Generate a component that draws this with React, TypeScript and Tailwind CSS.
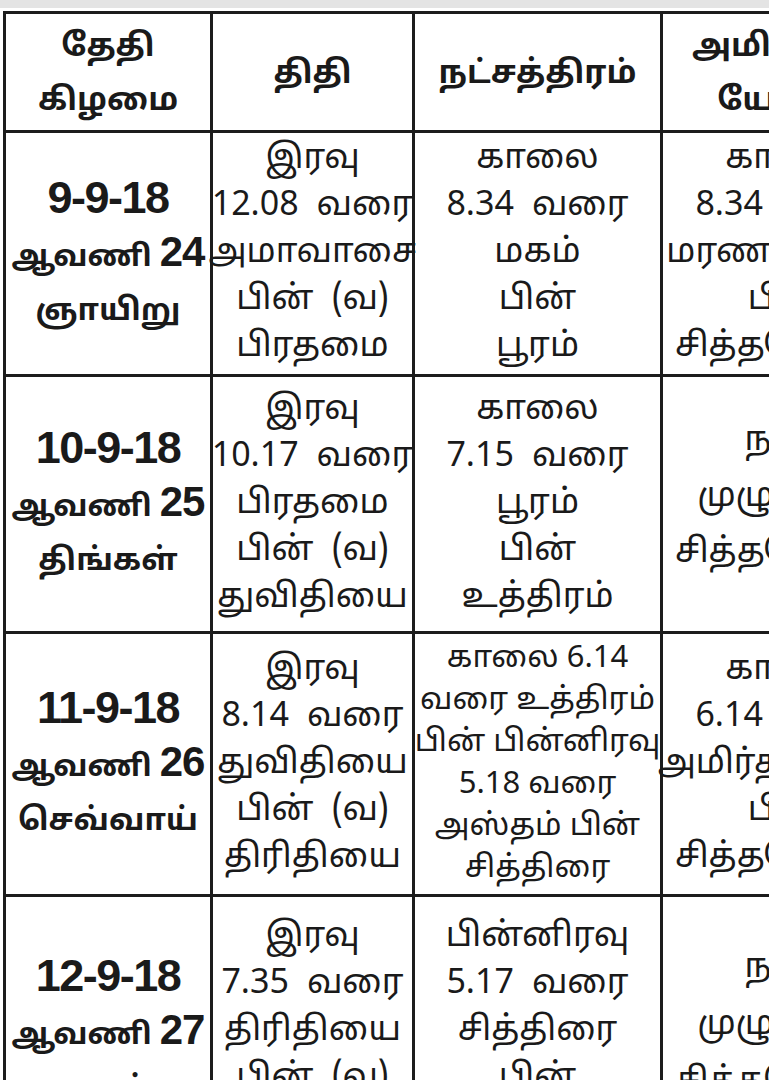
import React from "react";

type Cell = { lines: string[]; lh?: number; size?: number; gap?: number; pb?: number };

const TA = "font-['Liberation_Sans_Narrow','Noto_Sans_Tamil','Lohit_Tamil','Noto_Sans',sans-serif]";
const TA_BOLD = "font-['Liberation_Sans','Noto_Sans_Tamil','Lohit_Tamil','Noto_Sans',sans-serif]";

const rows: { h: number; date: [string, string, string]; cols: Cell[] }[] = [
  {
    h: 244,
    date: ["9-9-18", "24", "ஞாயிறு"],
    cols: [
      { lines: ["இரவு", "12.08 வரை", "அமாவாசை", "பின் (வ)", "பிரதமை"] },
      { lines: ["காலை", "8.34 வரை", "மகம்", "பின்", "பூரம்"] },
      { lines: ["காலை", "8.34 வரை", "மரணயோகம்", "பின்", "சித்தயோகம்"] },
    ],
  },
  {
    h: 257,
    date: ["10-9-18", "25", "திங்கள்"],
    cols: [
      { lines: ["இரவு", "10.17 வரை", "பிரதமை", "பின் (வ)", "துவிதியை"] },
      { lines: ["காலை", "7.15 வரை", "பூரம்", "பின்", "உத்திரம்"] },
      { lines: ["நாள்", "முழுவதும்", "சித்தயோகம்"], lh: 56, pb: 12 },
    ],
  },
  {
    h: 263,
    date: ["11-9-18", "26", "செவ்வாய்"],
    cols: [
      { lines: ["இரவு", "8.14 வரை", "துவிதியை", "பின் (வ)", "திரிதியை"] },
      {
        lines: ["காலை 6.14", "வரை உத்திரம்", "பின் பின்னிரவு", "5.18 வரை", "அஸ்தம் பின்", "சித்திரை"],
        lh: 42,
        size: 31,
        gap: 8,
      },
      { lines: ["காலை", "6.14 வரை", "அமிர்தயோகம்", "பின்", "சித்தயோகம்"] },
    ],
  },
  {
    h: 272,
    date: ["12-9-18", "27", "புதன்"],
    cols: [
      { lines: ["இரவு", "7.35 வரை", "திரிதியை", "பின் (வ)", "சதுர்த்தி"] },
      { lines: ["பின்னிரவு", "5.17 வரை", "சித்திரை", "பின்", "சுவாதி"] },
      { lines: ["நாள்", "முழுவதும்", "சித்தயோகம்"], lh: 57, pb: 12 },
    ],
  },
];

function Line({ text, gap }: { text: string; gap: number }) {
  const words = text.split(" ");
  return (
    <div className="flex justify-center whitespace-nowrap" style={{ columnGap: gap }}>
      {words.map((w, i) => (
        <span key={i}>{w}</span>
      ))}
    </div>
  );
}

const cellBorder = "border-r-[3px] border-b-[3px] border-[#1c1c1c]";

export default function App() {
  return (
    <div className="w-[769px] h-[1080px] overflow-hidden bg-white text-[#1a1a1a]">
      <div className="h-[8px] bg-[#e4e4e4]" />
      <div className="pt-[3px] pl-[3px]">
        <div className="grid grid-cols-[207px_202px_248px_250px] w-[907px] border-t-[3px] border-l-[3px] border-[#1c1c1c]">
          {/* header */}
          <div className={`h-[119px] ${cellBorder} flex flex-col items-center justify-center font-bold text-[32px] leading-[54px] ${TA_BOLD}`}>
            <span>தேதி</span>
            <span>கிழமை</span>
          </div>
          <div className={`h-[119px] ${cellBorder} flex items-center justify-center font-bold text-[32px] ${TA_BOLD}`}>
            திதி
          </div>
          <div className={`h-[119px] ${cellBorder} flex items-center justify-center font-bold text-[32px] ${TA_BOLD}`}>
            நட்சத்திரம்
          </div>
          <div className={`h-[119px] ${cellBorder} flex flex-col items-center justify-center font-bold text-[32px] leading-[54px] ${TA_BOLD}`}>
            <span className="whitespace-nowrap">அமிர்தாதி</span>
            <span className="whitespace-nowrap">யோகம்</span>
          </div>

          {rows.map((r, ri) => (
            <React.Fragment key={ri}>
              <div
                className={`${cellBorder} flex flex-col items-center justify-center font-bold leading-[54px] ${TA_BOLD}`}
                style={{ height: r.h }}
              >
                <span className="whitespace-nowrap text-[45px] tracking-[-1.5px]">{r.date[0]}</span>
                <span className="whitespace-nowrap flex items-baseline gap-[8px]">
                  <span className="text-[30px]">ஆவணி</span>
                  <span className="text-[42px] tracking-[-1px]">{r.date[1]}</span>
                </span>
                <span className="whitespace-nowrap text-[31px]">{r.date[2]}</span>
              </div>
              {r.cols.map((c, ci) => (
                <div
                  key={ci}
                  className={`${cellBorder} flex flex-col justify-center ${TA}`}
                  style={{
                    height: r.h,
                    lineHeight: `${c.lh ?? 47}px`,
                    fontSize: c.size ?? 34,
                    paddingBottom: c.pb ?? 0,
                  }}
                >
                  {c.lines.map((l, li) => (
                    <Line key={li} text={l} gap={c.gap ?? 18} />
                  ))}
                </div>
              ))}
            </React.Fragment>
          ))}
        </div>
      </div>
    </div>
  );
}
